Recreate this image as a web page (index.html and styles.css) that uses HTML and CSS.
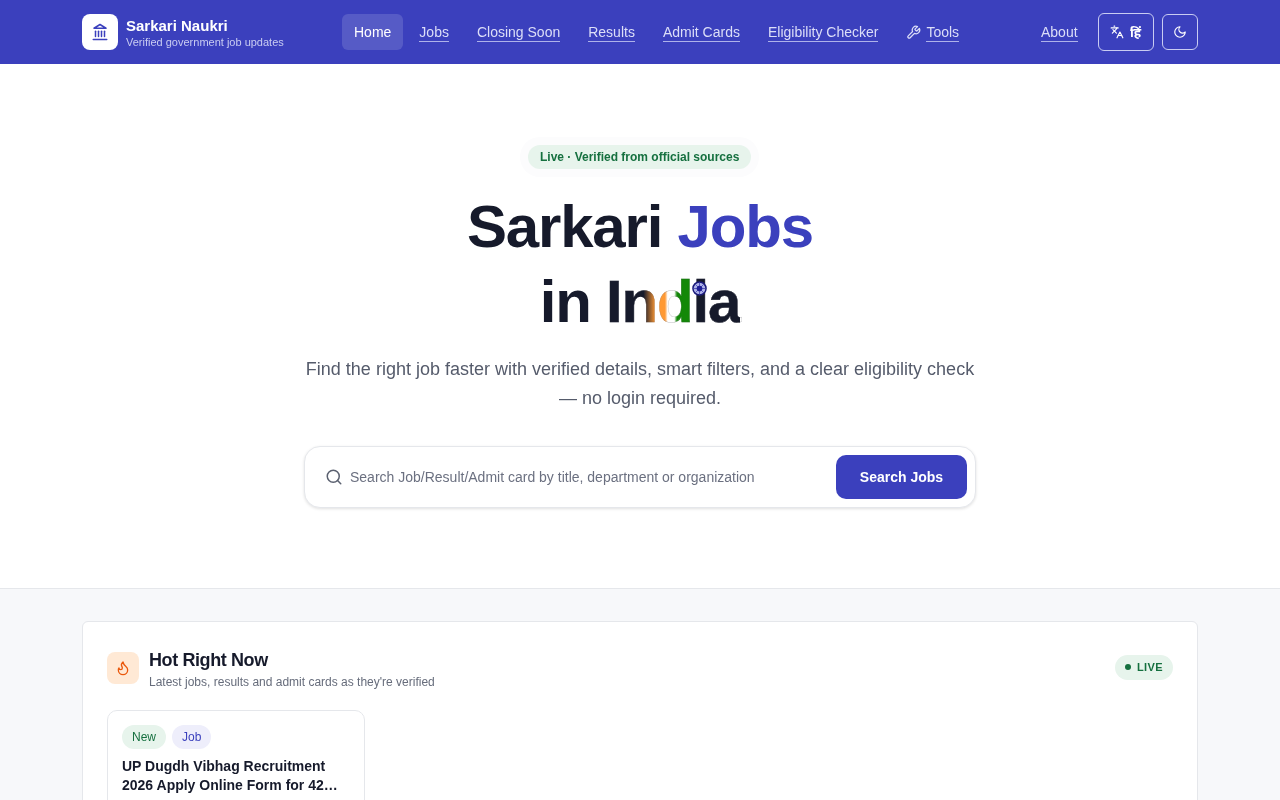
FILE: index.html
```html
<!DOCTYPE html>
<html lang="en">
<head>
    <meta charset="UTF-8">
    <meta name="viewport" content="width=device-width, initial-scale=1.0">
    <title>Sarkari Naukri</title>
    <link rel="stylesheet" href="styles.css">
</head>
<body>
    <header class="topbar">
        <a class="brand" href="#">
            <span class="brand-logo">
                <svg width="18" height="18" viewBox="0 0 24 24" fill="none" stroke="#3b40bd" stroke-width="2" stroke-linecap="round" stroke-linejoin="round"><path d="M3 22h18"/><path d="M6 18v-7"/><path d="M10 18v-7"/><path d="M14 18v-7"/><path d="M18 18v-7"/><path d="M12 2l8 5H4z"/></svg>
            </span>
            <span class="brand-text">
                <strong>Sarkari Naukri</strong>
                <small>Verified government job updates</small>
            </span>
        </a>
        <nav class="nav">
            <a class="nav-link active" href="#">Home</a>
            <a class="nav-link" href="#"><span>Jobs</span></a>
            <a class="nav-link" href="#"><span>Closing Soon</span></a>
            <a class="nav-link" href="#"><span>Results</span></a>
            <a class="nav-link" href="#"><span>Admit Cards</span></a>
            <a class="nav-link" href="#"><span>Eligibility Checker</span></a>
            <a class="nav-link tools" href="#">
                <svg width="15" height="15" viewBox="0 0 24 24" fill="none" stroke="currentColor" stroke-width="2" stroke-linecap="round" stroke-linejoin="round"><path d="M14.7 6.3a1 1 0 0 0 0 1.4l1.6 1.6a1 1 0 0 0 1.4 0l3.77-3.77a6 6 0 0 1-7.94 7.94l-6.91 6.91a2.12 2.12 0 0 1-3-3l6.91-6.91a6 6 0 0 1 7.94-7.94l-3.76 3.76z"/></svg>
                <span>Tools</span>
            </a>
        </nav>
        <div class="topbar-right">
            <a class="nav-link" href="#"><span>About</span></a>
            <button class="icon-btn lang-btn">
                <svg width="14" height="14" viewBox="0 0 24 24" fill="none" stroke="currentColor" stroke-width="2" stroke-linecap="round" stroke-linejoin="round"><path d="M5 8l6 6"/><path d="M4 14l6-6 2-3"/><path d="M2 5h12"/><path d="M7 2h1"/><path d="M22 22l-5-10-5 10"/><path d="M14 18h6"/></svg>
                <span>हिं</span>
            </button>
            <button class="icon-btn moon-btn">
                <svg width="14" height="14" viewBox="0 0 24 24" fill="none" stroke="currentColor" stroke-width="2" stroke-linecap="round" stroke-linejoin="round"><path d="M12 3a6 6 0 0 0 9 9 9 9 0 1 1-9-9z"/></svg>
            </button>
        </div>
    </header>

    <section class="hero">
        <div class="live-pill">Live · Verified from official sources</div>
        <h1>
            <span class="title-line">Sarkari <em>Jobs</em></span>
            <span class="title-line">in <span class="india">India<i class="chakra"><svg width="15" height="15" viewBox="0 0 24 24"><circle cx="12" cy="12" r="10.5" fill="#aeb2e8"/><g stroke="#3a3ab0" stroke-width="1.2"><path d="M12 3v18"/><path d="M3 12h18"/><path d="M5.6 5.6l12.8 12.8"/><path d="M18.4 5.6L5.6 18.4"/></g><circle cx="12" cy="12" r="4.5" fill="#1f1f95"/><circle cx="12" cy="12" r="10.5" fill="none" stroke="#1a1a7a" stroke-width="2.4"/></svg></i></span></span>
        </h1>
        <p class="lead">Find the right job faster with verified details, smart filters, and a clear eligibility check — no login required.</p>
        <form class="search">
            <svg width="18" height="18" viewBox="0 0 24 24" fill="none" stroke="#5b6170" stroke-width="2" stroke-linecap="round" stroke-linejoin="round"><circle cx="11" cy="11" r="8"/><path d="M21 21l-4.3-4.3"/></svg>
            <input type="text" placeholder="Search Job/Result/Admit card by title, department or organization">
            <button type="button">Search Jobs</button>
        </form>
    </section>

    <section class="lower">
        <div class="hot-panel">
            <div class="hot-head">
                <span class="flame">
                    <svg width="16" height="16" viewBox="0 0 24 24" fill="none" stroke="#ea580c" stroke-width="2" stroke-linecap="round" stroke-linejoin="round"><path d="M8.5 14.5A2.5 2.5 0 0 0 11 12c0-1.38-.5-2-1-3-1.07-2.14-.22-4.05 2-6 .5 2.5 2 4.9 4 6.5 2 1.6 3 3.5 3 5.5a7 7 0 1 1-14 0c0-1.15.43-2.29 1-3a2.5 2.5 0 0 0 2.5 2.5z"/></svg>
                </span>
                <div class="hot-title">
                    <h2>Hot Right Now</h2>
                    <p>Latest jobs, results and admit cards as they're verified</p>
                </div>
                <span class="live-badge"><b></b>LIVE</span>
            </div>
            <article class="job-card">
                <div class="tags">
                    <span class="tag tag-new">New</span>
                    <span class="tag tag-job">Job</span>
                </div>
                <h3>UP Dugdh Vibhag Recruitment 2026 Apply Online Form for 42…</h3>
            </article>
        </div>
    </section>
</body>
</html>
```

FILE: styles.css
```css
* {
    box-sizing: border-box;
}
html, body {
    height: 100%;
    overflow: hidden;
}
body {
    margin: 0;
    background: #fff;
    font-family: "Liberation Sans", Arial, sans-serif;
    color: #161a2b;
}
a {
    color: inherit;
    text-decoration: none;
}
/* own layers: text comes out with grayscale smoothing */
.topbar > *,
.hero > *,
.hot-head > *,
.job-card {
    will-change: transform;
}

/* header */
.topbar {
    height: 64px;
    background: #3b40bd;
    color: #fff;
    padding: 0 82px;
    display: flex;
    align-items: center;
}
.brand {
    display: flex;
    align-items: center;
    gap: 8px;
    width: 260px;
}
.brand-logo {
    width: 36px;
    height: 36px;
    background: #fff;
    border-radius: 8px;
    display: flex;
    align-items: center;
    justify-content: center;
}
.brand-text {
    display: flex;
    flex-direction: column;
}
.brand-text strong {
    font-size: 15px;
    line-height: 20px;
}
.brand-text small {
    font-size: 11px;
    line-height: 14px;
    margin-top: -1px;
    color: #c9ccf2;
}
.nav {
    display: flex;
    align-items: center;
    gap: 4px;
}
.nav-link {
    display: flex;
    align-items: center;
    gap: 6px;
    height: 36px;
    padding: 0 12px;
    font-size: 14px;
    color: #dcdef8;
    border-radius: 6px;
}
.nav-link span {
    border-bottom: 1px solid #aeb2ea;
    line-height: 17px;
    padding-top: 2px;
}
.nav-link.tools {
    gap: 5px;
}
.nav-link.active {
    background: rgba(255, 255, 255, 0.14);
    color: #fff;
}
.topbar-right {
    margin-left: auto;
    display: flex;
    align-items: center;
    gap: 8px;
}
.icon-btn {
    display: flex;
    align-items: center;
    justify-content: center;
    gap: 6px;
    height: 36px;
    background: transparent;
    color: #fff;
    border: 1px solid #c9ccf2;
    border-radius: 6px;
    font: bold 13px "Noto Sans", "DejaVu Sans", sans-serif;
    padding: 0;
}
.lang-btn {
    width: 56px;
    height: 38px;
}
.moon-btn {
    width: 36px;
}

/* hero */
.hero {
    height: 525px;
    padding-top: 81px;
    display: flex;
    flex-direction: column;
    align-items: center;
    background: #fff;
    border-bottom: 1px solid #e5e7eb;
}
.live-pill {
    background: #e7f4ec;
    color: #15703f;
    font-size: 12px;
    font-weight: bold;
    line-height: 24px;
    padding: 0 12px;
    border-radius: 12px;
    box-shadow: 0 0 0 8px #fcfcfd;
}
h1 {
    margin: 20px 0 0;
    font-size: 60px;
    line-height: 75px;
    font-weight: bold;
    letter-spacing: -1.2px;
    text-align: center;
}
.title-line {
    display: block;
}
h1 em {
    font-style: normal;
    color: #3b40bd;
}
.india {
    position: relative;
    color: transparent;
    background: linear-gradient(90deg, #161a2b 28%, #ff9933 37%, #ff9933 44%, #fff 46%, #fff 51%, #138808 53%, #138808 64%, #161a2b 65%);
    -webkit-background-clip: text;
    background-clip: text;
    -webkit-text-stroke: 0.4px rgba(60, 60, 70, 0.35);
}
.chakra {
    position: absolute;
    left: 86px;
    top: 8px;
    width: 15px;
    height: 15px;
    line-height: 0;
}
.lead {
    width: 680px;
    margin: 16px 0 0;
    font-size: 18px;
    line-height: 29px;
    color: #555b6b;
    text-align: center;
}
.search {
    width: 672px;
    height: 62px;
    margin-top: 33px;
    padding: 0 8px 0 20px;
    display: flex;
    align-items: center;
    gap: 7px;
    background: #fff;
    border: 1px solid #e5e7eb;
    border-radius: 16px;
    box-shadow: 0 1px 3px rgba(0, 0, 0, 0.12);
}
.search input {
    flex: 1;
    border: 0;
    outline: 0;
    padding: 0;
    font: 14px "Liberation Sans", Arial, sans-serif;
    color: #555b6b;
}
.search input::placeholder {
    color: #6b7080;
    opacity: 1;
}
.search button {
    width: 131px;
    height: 44px;
    background: #3b40bd;
    color: #fff;
    border: 0;
    border-radius: 10px;
    font: bold 14px "Liberation Sans", Arial, sans-serif;
}

/* hot right now */
.lower {
    background: #f7f8fa;
    padding: 32px 82px 0;
    height: 400px;
}
.hot-panel {
    background: #fff;
    border: 1px solid #e5e7eb;
    border-radius: 6px;
    padding: 25px 24px 24px;
    height: 360px;
}
.hot-head {
    display: flex;
    align-items: flex-start;
    gap: 10px;
}
.flame {
    width: 32px;
    height: 32px;
    margin-top: 5px;
    background: #ffe9d5;
    border-radius: 8px;
    display: flex;
    align-items: center;
    justify-content: center;
}
.hot-title h2 {
    margin: 0;
    font-size: 18px;
    line-height: 26px;
    letter-spacing: -0.4px;
}
.hot-title p {
    margin: 1px 0 0;
    font-size: 12px;
    line-height: 16px;
    color: #666c7b;
}
.live-badge {
    margin-left: auto;
    margin-top: 8px;
    height: 25px;
    padding: 0 10px 1px;
    display: flex;
    align-items: center;
    gap: 6px;
    background: #e7f4ec;
    color: #15703f;
    border-radius: 13px;
    font-size: 11px;
    font-weight: bold;
    letter-spacing: 0.4px;
}
.live-badge b {
    width: 6px;
    height: 6px;
    border-radius: 50%;
    background: #15703f;
}
.job-card {
    width: 258px;
    height: 200px;
    margin-top: 20px;
    padding: 14px;
    border: 1px solid #e5e7eb;
    border-radius: 10px;
}
.tags {
    display: flex;
    gap: 6px;
}
.tag {
    font-size: 12px;
    line-height: 24px;
    padding: 0 10px;
    border-radius: 12px;
}
.tag-new {
    background: #e7f4ec;
    color: #15703f;
}
.tag-job {
    background: #eeeefb;
    color: #3b40bd;
}
.job-card h3 {
    margin: 8px 0 0;
    font-size: 14px;
    line-height: 19px;
    color: #161a2b;
}
```
